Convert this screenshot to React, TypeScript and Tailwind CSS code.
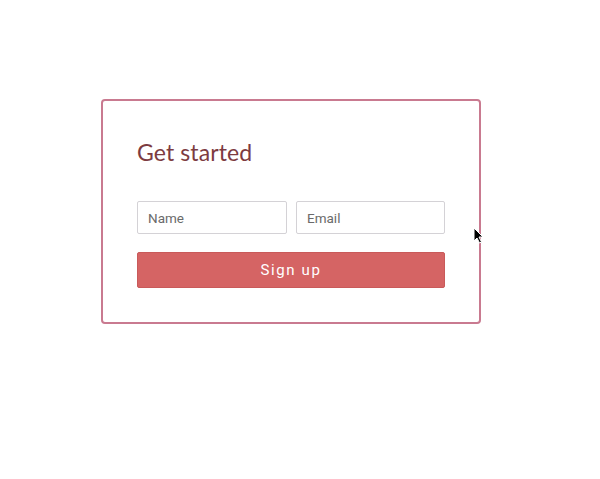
import React from "react";

export default function App() {
  return (
    <div className="relative w-[600px] h-[479px] bg-white" style={{ fontFamily: "Roboto, 'Liberation Sans', sans-serif" }}>
      <div className="pt-[99px] pl-[101px]">
        <div className="w-[380px] h-[225px] border-2 border-[#c97a90] rounded-[4px] px-[34px] pt-[36px] pb-[34px] flex flex-col">
          <h1 className="text-[23px] leading-[30px] text-[#7d3b41] font-normal tracking-[0.1px]" style={{ fontFamily: "Lato, 'Noto Sans', sans-serif" }}>
            Get started
          </h1>
          <div className="mt-[34px] flex gap-[9px]">
            <input
              placeholder="Name"
              className="w-[150px] h-[33px] border border-[#d4d2d6] rounded-[2px] px-[10px] text-[13.5px] text-[#555] placeholder:text-[#6a6a6a] outline-none"
            />
            <input
              placeholder="Email"
              className="w-[149px] h-[33px] border border-[#d4d2d6] rounded-[2px] px-[10px] text-[13.5px] text-[#555] placeholder:text-[#6a6a6a] outline-none"
            />
          </div>
          <button className="mt-[18px] w-[308px] h-[36px] bg-[#d56464] rounded-[2px] text-white text-[15px] tracking-[1.6px] border border-[#c95a5a]">
            Sign up
          </button>
        </div>
      </div>
      <svg className="absolute left-[473px] top-[227px]" width="11" height="17" viewBox="0 0 11 17">
        <path d="M1 1 L1 14 L4 11 L6.5 16 L8.5 15 L6 10 L10 10 Z" fill="#000" stroke="#fff" strokeWidth="1" />
      </svg>
    </div>
  );
}
